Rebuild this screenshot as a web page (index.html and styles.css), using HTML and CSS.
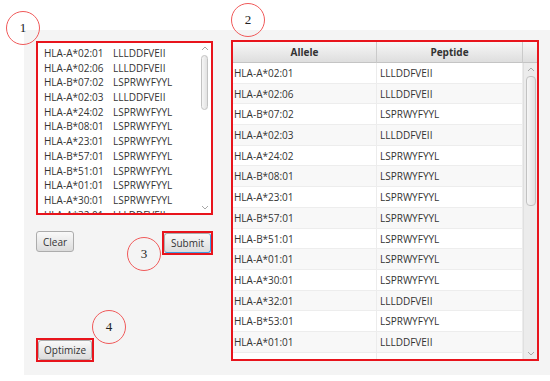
FILE: index.html
```html
<!DOCTYPE html>
<html lang="en">
<head>
  <meta charset="UTF-8">
  <title>Peptide Allele Selection</title>
  <link rel="stylesheet" href="styles.css">
</head>
<body>
  <div class="panel">
    <div class="left">
      <!-- 1: input list -->
      <div class="list hl">
        <div class="list-items">
          <div class="list-row"><span class="allele">HLA-A*02:01</span><span>LLLDDFVEII</span></div>
          <div class="list-row"><span class="allele">HLA-A*02:06</span><span>LLLDDFVEII</span></div>
          <div class="list-row"><span class="allele">HLA-B*07:02</span><span>LSPRWYFYYL</span></div>
          <div class="list-row"><span class="allele">HLA-A*02:03</span><span>LLLDDFVEII</span></div>
          <div class="list-row"><span class="allele">HLA-A*24:02</span><span>LSPRWYFYYL</span></div>
          <div class="list-row"><span class="allele">HLA-B*08:01</span><span>LSPRWYFYYL</span></div>
          <div class="list-row"><span class="allele">HLA-A*23:01</span><span>LSPRWYFYYL</span></div>
          <div class="list-row"><span class="allele">HLA-B*57:01</span><span>LSPRWYFYYL</span></div>
          <div class="list-row"><span class="allele">HLA-B*51:01</span><span>LSPRWYFYYL</span></div>
          <div class="list-row"><span class="allele">HLA-A*01:01</span><span>LSPRWYFYYL</span></div>
          <div class="list-row"><span class="allele">HLA-A*30:01</span><span>LSPRWYFYYL</span></div>
          <div class="list-row"><span class="allele">HLA-A*32:01</span><span>LLLDDFVEII</span></div>
        </div>
        <div class="sbar list-sbar">
          <svg class="arrow" width="8" height="5" viewBox="0 0 8 5"><polyline points="1,4 4,1 7,4" fill="none" stroke="#a8a8a8" stroke-width="1"/></svg>
          <div class="thumb list-thumb"></div>
          <div class="fill"></div>
          <svg class="arrow" width="8" height="5" viewBox="0 0 8 5"><polyline points="1,1 4,4 7,1" fill="none" stroke="#a8a8a8" stroke-width="1"/></svg>
        </div>
      </div>

      <div class="btn-row">
        <button class="btn clear">Clear</button>
        <div class="hl"><button class="btn focus">Submit</button></div>
      </div>

      <div class="hl optimize"><button class="btn">Optimize</button></div>
    </div>

    <!-- 2: result table -->
    <div class="table hl">
      <div class="th">Allele</div>
      <div class="th">Peptide</div>
      <div class="th corner"></div>
      <div class="tbody" id="tbody"></div>
      <div class="sbar table-sbar">
        <svg class="arrow" width="8" height="5" viewBox="0 0 8 5"><polyline points="1,4 4,1 7,4" fill="none" stroke="#a8a8a8" stroke-width="1"/></svg>
        <div class="thumb table-thumb"></div>
        <div class="fill"></div>
        <svg class="arrow" width="8" height="5" viewBox="0 0 8 5"><polyline points="1,1 4,4 7,1" fill="none" stroke="#a8a8a8" stroke-width="1"/></svg>
      </div>
    </div>
  </div>

  <!-- annotation marks -->
  <span class="mark m1">1</span>
  <span class="mark m2">2</span>
  <span class="mark m3">3</span>
  <span class="mark m4">4</span>

  <script>
    const rows = [
      ['HLA-A*02:01', 'LLLDDFVEII'],
      ['HLA-A*02:06', 'LLLDDFVEII'],
      ['HLA-B*07:02', 'LSPRWYFYYL'],
      ['HLA-A*02:03', 'LLLDDFVEII'],
      ['HLA-A*24:02', 'LSPRWYFYYL'],
      ['HLA-B*08:01', 'LSPRWYFYYL'],
      ['HLA-A*23:01', 'LSPRWYFYYL'],
      ['HLA-B*57:01', 'LSPRWYFYYL'],
      ['HLA-B*51:01', 'LSPRWYFYYL'],
      ['HLA-A*01:01', 'LSPRWYFYYL'],
      ['HLA-A*30:01', 'LSPRWYFYYL'],
      ['HLA-A*32:01', 'LLLDDFVEII'],
      ['HLA-B*53:01', 'LSPRWYFYYL'],
      ['HLA-A*01:01', 'LLLDDFVEII'],
      ['', '']
    ];

    const tbody = document.getElementById('tbody');
    rows.forEach(r => {
      const tr = document.createElement('div');
      tr.className = 'tr';
      r.forEach(text => {
        const td = document.createElement('div');
        td.className = 'td';
        td.textContent = text;
        tr.appendChild(td);
      });
      tbody.appendChild(tr);
    });
  </script>
</body>
</html>
```

FILE: styles.css
```css
* { box-sizing: border-box; }
body { margin: 0; width: 550px; height: 381px; overflow: hidden; position: relative; background: #fff;
  font-family: "Open Sans", "Noto Sans", sans-serif; font-size: 10px; color: #333; }

.panel { margin: 30px 0 0 24px; height: 345px; background: #f4f4f4; display: flex; gap: 18px;
  align-items: flex-start; padding: 10px 11px 0 12px; }
.left { width: 177px; height: 321px; margin-top: 1px; display: flex; flex-direction: column; }
.hl { border: 2px solid #e8141c; }

/* list view */
.list { height: 174px; background: #fff; display: flex; overflow: hidden; }
.list-items { flex: 1; padding: 3px 0 0 6px; }
.list-row { display: flex; height: 14.7px; line-height: 14.7px; white-space: nowrap; }
.list-row .allele { width: 69px; }

/* scrollbars */
.sbar { display: flex; flex-direction: column; align-items: center; }
.sbar .fill { flex: 1; }
.thumb { border: 1px solid #c2c2c2; border-radius: 4px; background: linear-gradient(to right, #f6f6f6, #e2e2e2); }
.list-sbar { width: 13px; padding: 3px 0 3px; }
.list-thumb { width: 7px; height: 55px; margin-top: 4px; }
.table-sbar { background: #ececec; border-left: 1px solid #e0e0e0; padding: 4px 0 3px; }
.table-thumb { width: 10px; height: 130px; margin-top: 4px; }

/* buttons */
.btn-row { display: flex; justify-content: space-between; align-items: flex-start; margin-top: 16px; }
.btn { display: block; font: inherit; color: #333; height: 20px; padding: 0 6px; border: 1px solid #acacac;
  border-radius: 3px; background: linear-gradient(#f9f9f9, #dcdcdc); }
.btn.clear { height: 21px; }
.btn.focus { border-right-color: #3d9be0; border-bottom-color: #3d9be0; }
.optimize { margin-top: auto; align-self: flex-start; }
.optimize .btn { padding: 0 5px; }

/* table view */
.table { width: 308px; height: 321px; background: #fff; display: grid; overflow: hidden;
  grid-template-columns: 144px 146px 14px; grid-template-rows: 21px 1fr; }
.th { font-weight: bold; text-align: center; line-height: 20px; border-right: 1px solid #cacaca;
  border-bottom: 1px solid #c4c4c4; background: linear-gradient(#f7f7f7, #dedede); }
.th.corner { border-right: none; }
.tbody { grid-column: 1 / 3; overflow: hidden; }
.tr { display: grid; grid-template-columns: 144px 146px; height: 20.7px; line-height: 20px;
  border-bottom: 1px solid #ededed; white-space: nowrap; }
.tr:nth-child(even) { background: #f8f8f8; }
.td { padding-left: 1px; border-right: 1px solid #ececec; }
.td + .td { padding-left: 3px; }

/* annotation circles */
.mark { position: absolute; width: 34px; height: 34px; border: 1px solid #f05a5a; border-radius: 50%;
  display: flex; align-items: center; justify-content: center;
  font-family: "Liberation Serif", serif; font-size: 13px; color: #222; }
.m1 { left: 6px; top: 11px; }
.m2 { left: 231px; top: 3px; }
.m3 { left: 127px; top: 237px; }
.m4 { left: 92px; top: 310px; }
```
